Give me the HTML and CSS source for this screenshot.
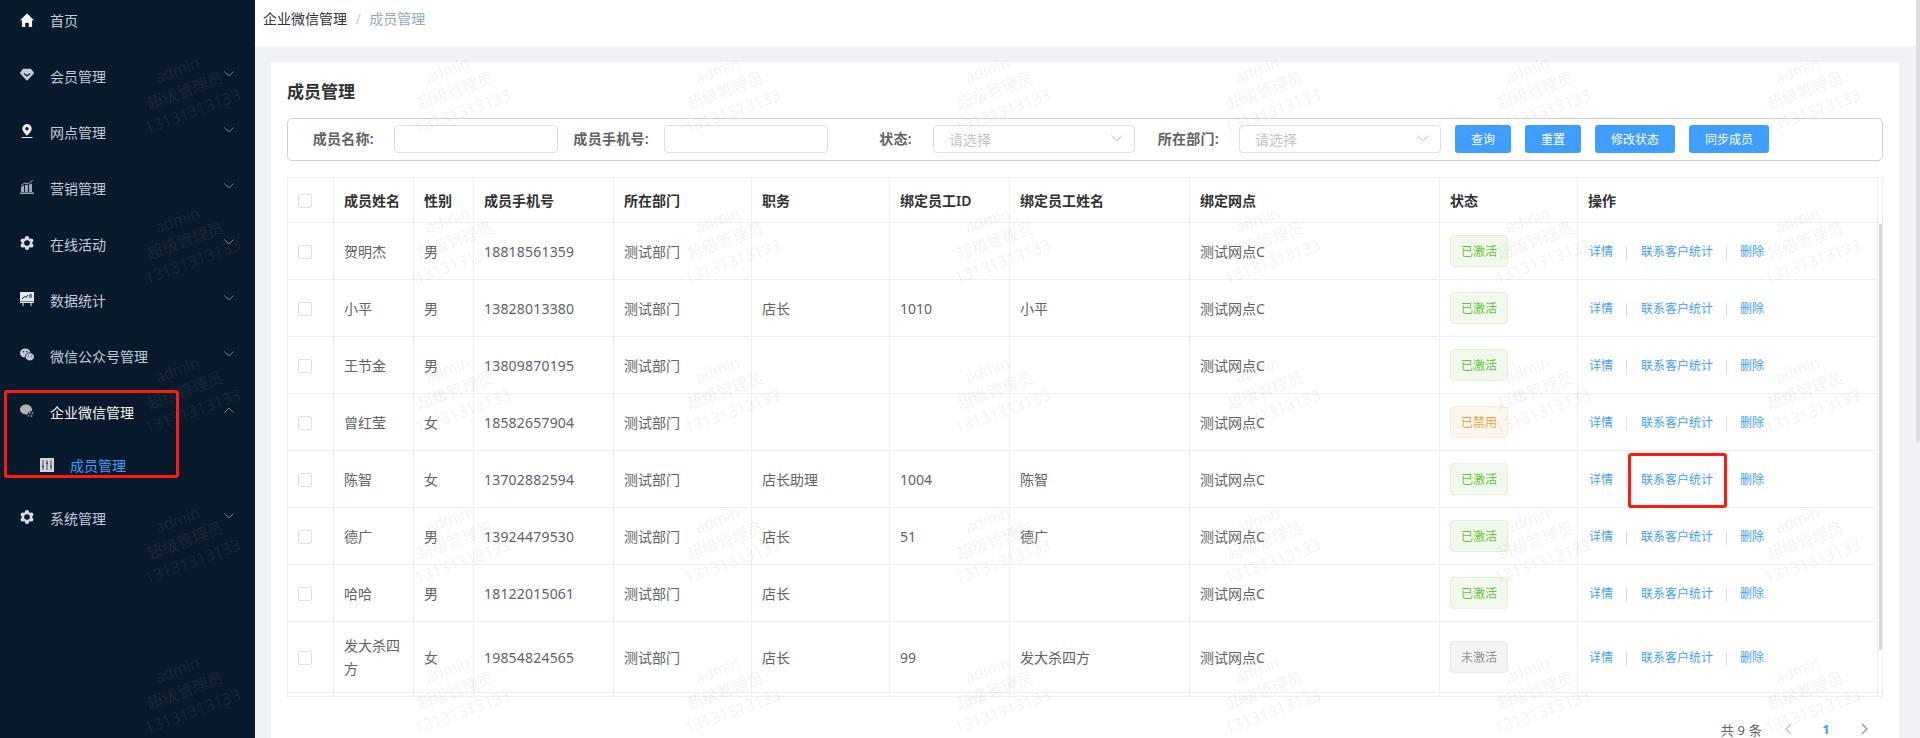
FILE: index.html
```html
<!DOCTYPE html>
<html lang="zh-CN">
<head>
<meta charset="utf-8">
<title>成员管理</title>
<link rel="stylesheet" href="styles.css">
</head>
<body>
<aside class="sidebar">
  <nav class="menu">
    <a class="menu-item"><svg class="icon" viewBox="0 0 16 16"><path fill="#fff" d="M8 .5l8 7.800h-2.200V16H10v-5H6v5H2.200V8.300H0z"/></svg><span>首页</span></a>
    <a class="menu-item"><svg class="icon icon-up" viewBox="0 0 14 14"><path fill="#c5d0dc" stroke="#c5d0dc" stroke-width="1.500" stroke-linejoin="round" d="M3.500 1.500h7l2.700 3.500L7 11.800.8 5z"/><path fill="none" stroke="#0a1a2d" stroke-width="1.200" d="M4 5.500l3 2.500 3-2.500"/></svg><span>会员管理</span><svg class="chev" viewBox="0 0 10 6"><path d="M.5.500L5 5 9.500.5"/></svg></a>
    <a class="menu-item"><svg class="icon icon-up" viewBox="0 0 14 14"><path fill="#e8ecf0" d="M7 0a4.700 4.700 0 0 1 4.700 4.700C11.700 7.600 7 11.500 7 11.500S2.300 7.600 2.300 4.700A4.700 4.700 0 0 1 7 0z"/><circle cx="7" cy="4.700" r="1.700" fill="#0a1a2d"/><rect x="1.500" y="13" width="11" height="1" fill="#e8ecf0"/></svg><span>网点管理</span><svg class="chev" viewBox="0 0 10 6"><path d="M.5.500L5 5 9.500.5"/></svg></a>
    <a class="menu-item"><svg class="icon icon-up" viewBox="0 0 14 14"><path fill="#9aa7b4" d="M1 7l3-2v7H1zM5 5h3v7H5zM9 4.500l3-1V12H9zM0 12.500h14V14H0z"/><path fill="none" stroke="#9aa7b4" d="M1 5l4-2 3 1 5-4"/></svg><span>营销管理</span><svg class="chev" viewBox="0 0 10 6"><path d="M.5.500L5 5 9.500.5"/></svg></a>
    <a class="menu-item"><svg class="icon icon-up" viewBox="0 0 14 14"><g fill="#d5dce4"><circle cx="7" cy="7" r="5"/><circle cx="7" cy="2.200" r="2.200"/><circle cx="7" cy="11.800" r="2.200"/><circle cx="2.800" cy="4.600" r="2.200"/><circle cx="11.200" cy="4.600" r="2.200"/><circle cx="2.800" cy="9.400" r="2.200"/><circle cx="11.200" cy="9.400" r="2.200"/></g><circle cx="7" cy="7" r="2.800" fill="#0a1a2d"/></svg><span>在线活动</span><svg class="chev" viewBox="0 0 10 6"><path d="M.5.500L5 5 9.500.5"/></svg></a>
    <a class="menu-item"><svg class="icon icon-up" viewBox="0 0 14 14"><rect y="0" width="14" height="9.500" fill="#e4e8ec"/><rect y="10" width="14" height="1" fill="#e4e8ec"/><path fill="#e4e8ec" d="M2.500 11h1v3h-1zM10.500 11h1v3h-1z"/><path fill="none" stroke="#0a1a2d" d="M2 7l2.500-2.500 1.500 1L8 3"/><path stroke="#0a1a2d" d="M9 3h3M9 5h3"/></svg><span>数据统计</span><svg class="chev" viewBox="0 0 10 6"><path d="M.5.500L5 5 9.500.5"/></svg></a>
    <a class="menu-item"><svg class="icon icon-up" viewBox="0 0 14 14"><ellipse cx="5.200" cy="5" rx="5.200" ry="4.500" fill="#bfcbd9"/><ellipse cx="9.800" cy="8.800" rx="4.500" ry="4" fill="#bfcbd9" stroke="#0a1a2d" stroke-width=".8"/><circle cx="3.500" cy="3.800" r=".7" fill="#0a1a2d"/><circle cx="6.800" cy="3.800" r=".7" fill="#0a1a2d"/><circle cx="8.300" cy="8" r=".6" fill="#0a1a2d"/><circle cx="11.300" cy="8" r=".6" fill="#0a1a2d"/></svg><span>微信公众号管理</span><svg class="chev" viewBox="0 0 10 6"><path d="M.5.500L5 5 9.500.5"/></svg></a>
    <div class="menu-group">
      <a class="menu-item menu-item-open"><svg class="icon icon-up" viewBox="0 0 14 14"><path fill="#b2b2b2" d="M6 .5c3.300 0 6 2.200 6 5 0 .5-.1 1-.3 1.500L8.800 8 7 10.800 3.800 10C1.500 9.300 0 7.600 0 5.500c0-2.800 2.700-5 6-5z"/><g fill="#8f99a3"><circle cx="9.800" cy="9" r=".9"/><circle cx="12.500" cy="9" r=".9"/><circle cx="8.500" cy="11.800" r=".9"/><circle cx="11.500" cy="12" r=".9"/></g></svg><span>企业微信管理</span><svg class="chev" viewBox="0 0 10 6"><path d="M.5 5.500L5 1l4.500 4.500"/></svg></a>
      <a class="submenu-item"><svg class="icon" viewBox="0 0 14 14"><rect width="14" height="14" fill="#ced5dc"/><path stroke="#3a4754" stroke-width=".9" d="M3 2v10M7 2v10M11 2v10"/><path stroke="#3a4754" stroke-width="1.600" d="M2 8.500h2M6 5h2M10 8.500h2"/></svg><span>成员管理</span></a>
    </div>
    <a class="menu-item"><svg class="icon icon-up" viewBox="0 0 14 14"><g fill="#d5dce4"><circle cx="7" cy="7" r="5"/><circle cx="7" cy="2.200" r="2.200"/><circle cx="7" cy="11.800" r="2.200"/><circle cx="2.800" cy="4.600" r="2.200"/><circle cx="11.200" cy="4.600" r="2.200"/><circle cx="2.800" cy="9.400" r="2.200"/><circle cx="11.200" cy="9.400" r="2.200"/></g><circle cx="7" cy="7" r="2.800" fill="#0a1a2d"/></svg><span>系统管理</span><svg class="chev" viewBox="0 0 10 6"><path d="M.5.500L5 5 9.500.5"/></svg></a>
  </nav>
</aside>

<main class="main">
  <header class="topbar">
    <span class="crumb">企业微信管理</span><span class="crumb-sep">/</span><span class="crumb crumb-current">成员管理</span>
  </header>
  <section class="card">
    <h1 class="card-title">成员管理</h1>
    <form class="filters">
      <label class="field-label">成员名称:</label><div class="input"></div>
      <label class="field-label field-label-m">成员手机号:</label><div class="input"></div>
      <label class="field-label field-label-s">状态:</label>
      <div class="select"><span>请选择</span><svg viewBox="0 0 12 7"><path d="M.5.500L6 6l5.500-5.500"/></svg></div>
      <label class="field-label field-label-xs">所在部门:</label>
      <div class="select"><span>请选择</span><svg viewBox="0 0 12 7"><path d="M.5.500L6 6l5.500-5.500"/></svg></div>
      <div class="buttons">
        <a class="btn">查询</a><a class="btn">重置</a><a class="btn btn-wide">修改状态</a><a class="btn btn-wide">同步成员</a>
      </div>
    </form>

    <div class="table-wrap">
      <table class="table">
        <colgroup>
          <col class="c46"><col class="c80"><col class="c60"><col class="c140"><col class="c138"><col class="c138"><col class="c120"><col class="c180"><col class="c250"><col class="c138"><col class="c300"><col class="c5">
        </colgroup>
        <thead>
          <tr><th><i class="check"></i></th><th>成员姓名</th><th>性别</th><th>成员手机号</th><th>所在部门</th><th>职务</th><th>绑定员工ID</th><th>绑定员工姓名</th><th>绑定网点</th><th>状态</th><th>操作</th><th></th></tr>
        </thead>
        <tbody>
          <tr><td><i class="check"></i></td><td>贺明杰</td><td>男</td><td class="num">18818561359</td><td>测试部门</td><td></td><td></td><td></td><td>测试网点C</td><td><span class="tag">已激活</span></td><td class="ops"><a>详情</a><i></i><a>联系客户统计</a><i></i><a>删除</a></td><td class="gutter" rowspan="8"></td></tr>
          <tr><td><i class="check"></i></td><td>小平</td><td>男</td><td class="num">13828013380</td><td>测试部门</td><td>店长</td><td>1010</td><td>小平</td><td>测试网点C</td><td><span class="tag">已激活</span></td><td class="ops"><a>详情</a><i></i><a>联系客户统计</a><i></i><a>删除</a></td></tr>
          <tr><td><i class="check"></i></td><td>王节金</td><td>男</td><td class="num">13809870195</td><td>测试部门</td><td></td><td></td><td></td><td>测试网点C</td><td><span class="tag">已激活</span></td><td class="ops"><a>详情</a><i></i><a>联系客户统计</a><i></i><a>删除</a></td></tr>
          <tr><td><i class="check"></i></td><td>曾红莹</td><td>女</td><td class="num">18582657904</td><td>测试部门</td><td></td><td></td><td></td><td>测试网点C</td><td><span class="tag tag-warn">已禁用</span></td><td class="ops"><a>详情</a><i></i><a>联系客户统计</a><i></i><a>删除</a></td></tr>
          <tr><td><i class="check"></i></td><td>陈智</td><td>女</td><td class="num">13702882594</td><td>测试部门</td><td>店长助理</td><td>1004</td><td>陈智</td><td>测试网点C</td><td><span class="tag">已激活</span></td><td class="ops"><a>详情</a><i></i><a>联系客户统计</a><i></i><a>删除</a></td></tr>
          <tr><td><i class="check"></i></td><td>德广</td><td>男</td><td class="num">13924479530</td><td>测试部门</td><td>店长</td><td>51</td><td>德广</td><td>测试网点C</td><td><span class="tag">已激活</span></td><td class="ops"><a>详情</a><i></i><a>联系客户统计</a><i></i><a>删除</a></td></tr>
          <tr><td><i class="check"></i></td><td>哈哈</td><td>男</td><td class="num">18122015061</td><td>测试部门</td><td>店长</td><td></td><td></td><td>测试网点C</td><td><span class="tag">已激活</span></td><td class="ops"><a>详情</a><i></i><a>联系客户统计</a><i></i><a>删除</a></td></tr>
          <tr class="row-tall"><td><i class="check"></i></td><td>发大杀四方</td><td>女</td><td class="num">19854824565</td><td>测试部门</td><td>店长</td><td>99</td><td>发大杀四方</td><td>测试网点C</td><td><span class="tag tag-muted">未激活</span></td><td class="ops"><a>详情</a><i></i><a>联系客户统计</a><i></i><a>删除</a></td></tr>
          <tr class="row-end"><td></td><td></td><td></td><td></td><td></td><td></td><td></td><td></td><td></td><td></td><td></td><td></td></tr>
        </tbody>
      </table>
      <div class="table-thumb"></div>
    </div>

    <div class="pager">
      <span class="pager-total">共 9 条</span>
      <span class="pager-btn"><svg viewBox="0 0 7 12" class="pager-prev"><path d="M6 1L1 6l5 5"/></svg></span>
      <span class="pager-btn pager-num">1</span>
      <span class="pager-btn"><svg viewBox="0 0 7 12" class="pager-next"><path d="M1 1l5 5-5 5"/></svg></span>
    </div>
  </section>
</main>

<div class="page-thumb"></div>
<div class="mark mark-menu"></div>
<div class="mark mark-action"></div>

<svg class="watermark" width="100%" height="100%" aria-hidden="true">
  <defs>
    <pattern id="wm" x="52" y="21" width="270" height="150" patternUnits="userSpaceOnUse">
      <g transform="rotate(-20 135 75)" class="wm-text">
        <text x="135" y="53" text-anchor="middle">admin</text>
        <text x="135" y="75" text-anchor="middle">超级管理员</text>
        <text x="135" y="97" text-anchor="middle">13131313133</text>
      </g>
    </pattern>
  </defs>
  <rect width="100%" height="100%" fill="url(#wm)"/>
</svg>
</body>
</html>
```

FILE: styles.css
```css
* { box-sizing: border-box; }
html, body { margin: 0; height: 100%; }
body {
  display: flex;
  height: 738px;
  overflow: hidden;
  position: relative;
  background: #f0f2f5;
  font-family: "Noto Sans", "Noto Sans CJK SC", sans-serif;
  font-size: 14px;
  color: #606266;
}

/* sidebar */
.sidebar { width: 255px; flex: none; background: #0a1a2d; overflow: hidden; }
.menu { margin-top: -8px; }
.menu-item {
  display: flex;
  align-items: center;
  height: 56px;
  padding: 0 21px 0 20px;
  color: #bfcbd9;
}
.menu-item-open { color: #f4f4f5; }
.icon { width: 14px; height: 14px; flex: none; margin-right: 16px; }
.icon-up { position: relative; top: -1px; }
.chev { width: 10px; height: 6px; margin-left: auto; position: relative; top: -2px; fill: none; stroke: #75838f; stroke-width: 1; }
.submenu-item {
  display: flex;
  align-items: center;
  height: 50px;
  padding-left: 40px;
  color: #409eff;
}

/* main */
.main { flex: 1; min-width: 0; display: flex; flex-direction: column; height: 738px; }
.topbar {
  height: 46px;
  flex: none;
  display: flex;
  align-items: center;
  padding: 0 0 10px 8px;
  background: #fff;
}
.crumb { color: #303133; }
.crumb-current { color: #97a8be; }
.crumb-sep { margin: 0 8.5px; color: #c0c4cc; }

.card {
  flex: 1;
  min-height: 0;
  overflow: hidden;
  margin: 16px 21px 0 16px;
  padding: 16px;
  background: #fff;
}
.card-title { margin: 0 0 12px; font-size: 17px; line-height: 28px; font-weight: 700; color: #303133; }

/* filter bar */
.filters {
  display: flex;
  align-items: center;
  height: 43px;
  padding-bottom: 1px;
  border: 1px solid #cfcfcf;
  border-radius: 5px;
}
.field-label { position: relative; top: -1px; width: 106px; flex: none; padding-right: 20px; text-align: right; font-weight: 600; letter-spacing: .3px; color: #606266; }
.field-label-m { padding-right: 15px; }
.field-label-s { width: 105px; padding-right: 21px; }
.field-label-xs { width: 104px; }
.input { width: 164px; height: 28px; flex: none; border: 1px solid #dcdfe6; border-radius: 4px; background: #fff; }
.select {
  display: flex;
  align-items: center;
  justify-content: space-between;
  width: 202px;
  height: 28px;
  flex: none;
  padding: 0 11px 1px 15px;
  border: 1px solid #dcdfe6;
  border-radius: 4px;
  color: #c0c4cc;
}
.select svg { width: 12px; height: 7px; fill: none; stroke: #c0c4cc; stroke-width: 1; }
.buttons { display: flex; gap: 14px; margin-left: 14px; }
.btn {
  display: flex;
  align-items: center;
  justify-content: center;
  width: 56px;
  height: 28px;
  border-radius: 3px;
  background: #409eff;
  color: #fff;
  font-size: 12px;
}
.btn-wide { width: 80px; }

/* table */
.table-wrap { position: relative; margin-top: 16px; }
.table { width: 1596px; table-layout: fixed; border-collapse: collapse; }
.c46 { width: 46px; } .c80 { width: 80px; } .c60 { width: 60px; } .c140 { width: 140px; }
.c138 { width: 138px; } .c120 { width: 120px; } .c180 { width: 180px; } .c250 { width: 250px; }
.c300 { width: 300px; } .c5 { width: 5px; }
.table th, .table td {
  border: 1px solid #ebeef5;
  padding: 0 10px;
  text-align: left;
  line-height: 23px;
}
.table th { height: 45px; color: #303133; font-weight: 600; }
.table td { height: 57px; }
.table .row-tall td { height: 71px; }
.table .row-end td { height: 4px; padding: 0; line-height: 0; }
.table .gutter { padding: 0; }
.table .num { letter-spacing: .2px; }
.check { display: block; width: 14px; height: 14px; margin-top: 1px; border: 1px solid #dcdfe6; border-radius: 2px; background: #fff; }
.tag {
  display: inline-flex;
  align-items: center;
  justify-content: center;
  width: 58px;
  height: 32px;
  vertical-align: middle;
  border: 1px solid #e1f3d8;
  border-radius: 4px;
  background: #f0f9eb;
  color: #67c23a;
  font-size: 12px;
}
.tag-warn { background: #fdf6ec; border-color: #faecd8; color: #e6a23c; }
.tag-muted { background: #f4f4f5; border-color: #e9e9eb; color: #909399; }
.table .ops { padding-left: 11px; padding-top: 1px; font-size: 12px; color: #409eff; }
.ops a { color: #409eff; }
.ops i { display: inline-block; width: 1px; height: 14px; margin: 0 13px; vertical-align: middle; background: #dcdfe6; }
.ops i:first-of-type { margin: 0 14.5px 0 12.5px; }
.table-thumb { position: absolute; top: 47px; right: 1px; width: 3px; height: 426px; background: #d9d9d9; }

/* pagination */
.pager { display: flex; justify-content: flex-end; align-items: center; height: 28px; margin-top: 18px; font-size: 13px; }
.pager-total { margin-right: 7px; letter-spacing: .2px; }
.pager-btn { display: flex; align-items: center; justify-content: center; width: 38px; height: 28px; }
.pager-num { color: #409eff; font-weight: 700; }
.pager-btn svg { width: 7px; height: 12px; fill: none; stroke-width: 1.4; }
.pager-prev { stroke: #c0c4cc; }
.pager-next { stroke: #909399; }

/* overlays */
.page-thumb { position: absolute; top: 0; left: 1916px; width: 4px; height: 442px; background: #dedede; }
.mark { position: absolute; border: 3px solid #ff1a10; border-radius: 3px; pointer-events: none; }
.mark-menu { left: 4px; top: 390px; width: 175px; height: 88px; }
.mark-action { left: 1628px; top: 453px; width: 99px; height: 55px; }
.watermark { position: absolute; inset: 0; pointer-events: none; }
.wm-text { font-size: 16px; font-weight: 300; fill: rgba(128, 128, 128, 0.14); font-family: "Noto Sans", "Noto Sans CJK SC", sans-serif; }
```
